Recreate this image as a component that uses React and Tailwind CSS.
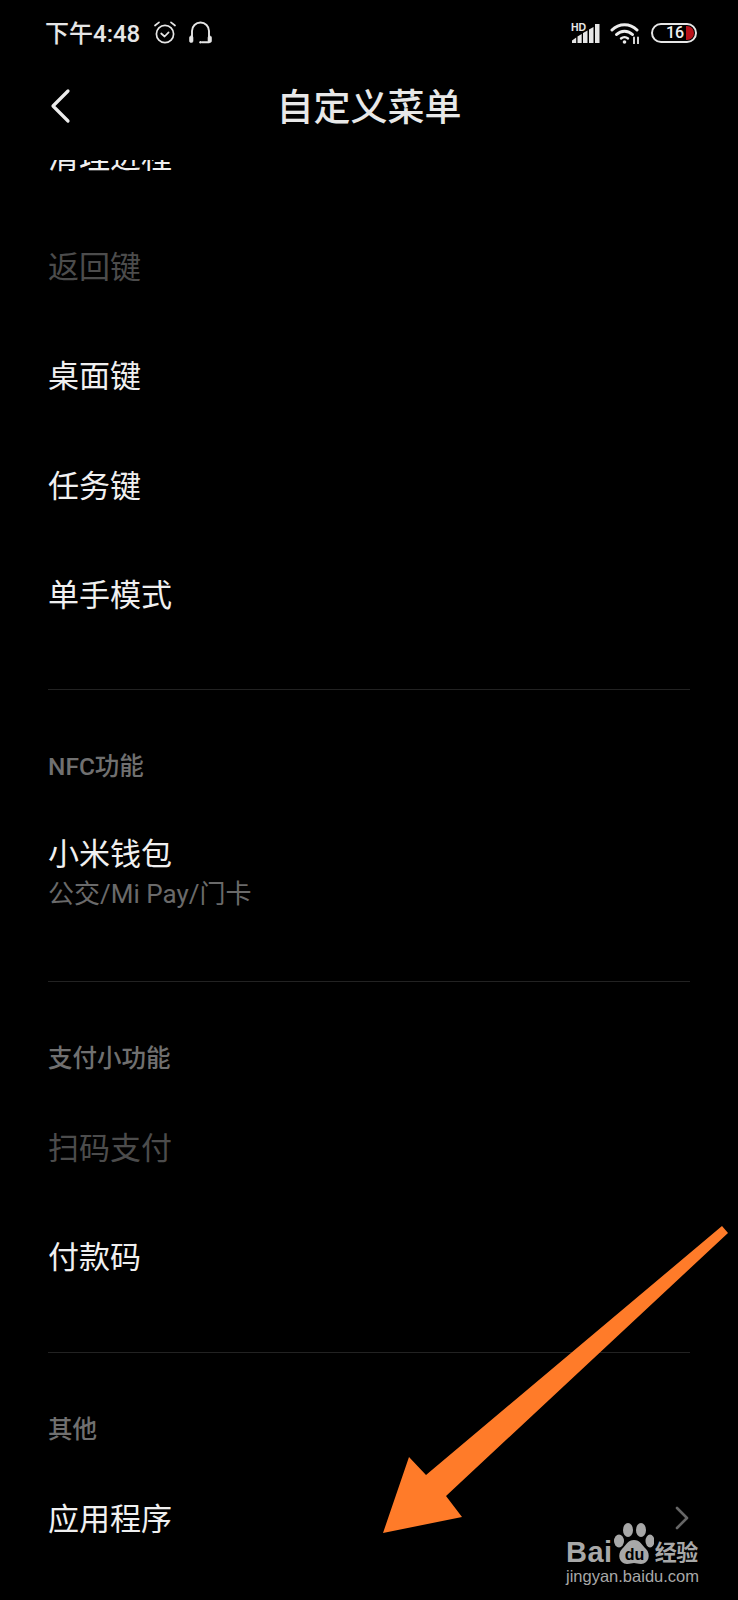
const font = { fontFamily: '"Roboto","Noto Sans CJK SC",sans-serif' };

function Row({ children, muted }) {
  return (
    <div className={`h-[109.5px] pt-[1px] flex items-center text-[31px] leading-[40px] ${muted ? "text-[#4c4c4c]" : "text-[#f0f0f0]"}`}>
      {children}
    </div>
  );
}
function Label({ children }) {
  return <div className="mt-[47px] h-[60px] pt-[2px] flex items-center text-[24.5px] font-medium text-[#707070]">{children}</div>;
}
const Divider = ({ className = "" }) => <div className={`h-px w-[642px] bg-[#222222] ${className}`} />;

export default function App() {
  return (
    <div style={font} className="relative w-[738px] h-[1600px] overflow-hidden bg-black">
      {/* status bar */}
      <div className="h-[66px] pl-[45px] pr-[41px] flex items-center justify-between">
        <div className="flex items-center">
          <span className="text-[24px] font-medium text-[#e6e6e6] leading-none pt-[2px]">下午4:48</span>
          <svg className="ml-[13px] -mt-[1px]" width="24" height="25" viewBox="0 0 24 25" fill="none" stroke="#e6e6e6" strokeWidth="1.7" strokeLinecap="round" strokeLinejoin="round">
            <circle cx="12" cy="14" r="8.6" />
            <path d="M8.2 13.5l3.4 3 4-4.2" />
            <path d="M2 5.5L6 2.3M22 5.5L18 2.3" />
          </svg>
          <svg className="ml-[11px] -mt-[1px]" width="25" height="23" viewBox="0 0 25 23" fill="none" stroke="#e6e6e6" strokeWidth="1.9" strokeLinecap="round">
            <path d="M4 16V10a8.5 8.5 0 0 1 17 0v6" />
            <rect x="1.5" y="15" width="3.5" height="6.5" rx="1.6" fill="#e6e6e6" strokeWidth="0.6" />
            <rect x="20" y="15" width="3.5" height="6.5" rx="1.6" fill="#e6e6e6" strokeWidth="0.6" />
            <path d="M21 21.2h-7" />
            <circle cx="12.5" cy="21.2" r="1.2" fill="#e6e6e6" stroke="none" />
          </svg>
        </div>
        <div className="flex items-center">
          <div className="relative w-[29px] h-[20px]">
            <span className="absolute left-0 -top-[1px] text-[10.5px] font-bold leading-[10px] text-[#e6e6e6]" style={{ fontFamily: '"Liberation Sans",sans-serif' }}>HD</span>
            <svg className="absolute inset-0" width="29" height="20" viewBox="0 0 29 20" fill="#e6e6e6">
              <path d="M1 20v-2.5l4.2-3V20zM6.5 20v-6.5l4.2-2.5v9zM12 20V10l4.5-2.5V20zM18 20V6.5L22.5 4v16zM24 20V1h4.5v19z" />
            </svg>
          </div>
          <svg className="ml-[10px]" width="30" height="22" viewBox="0 0 30 22" fill="none" stroke="#ececec" strokeWidth="3" strokeLinecap="round">
            <path d="M2 8C9 1 20 1 27 8" />
            <path d="M6.5 12.5C11 8 18 8 22.5 12.5" />
            <path d="M11 16.5c2-1.7 5-1.7 7 0" strokeWidth="2.4" />
            <circle cx="14.5" cy="20" r="1.8" fill="#ececec" stroke="none" />
            <path d="M24 15.5v6M28 15.5v6" strokeWidth="1.8" />
          </svg>
          <div className="ml-[11px] relative w-[46px] h-[20px] rounded-[10px] border-2 border-[#e6e6e6] flex items-center">
            <span className="ml-[13px] text-[16px] font-medium leading-none text-[#f0f0f0]">16</span>
            <div className="absolute right-[1px] top-[1px] w-[8px] h-[14px] rounded-r-[7px] bg-[#b8121a]" />
          </div>
        </div>
      </div>

      {/* title bar */}
      <div className="relative h-[94px] flex items-center justify-center">
        <svg className="absolute left-[49px] top-[22px]" width="24" height="36" viewBox="0 0 24 36" fill="none" stroke="#ececec" strokeWidth="3.2" strokeLinecap="round" strokeLinejoin="round">
          <path d="M19 3L4 18l15 15" />
        </svg>
        <h1 className="text-[37px] font-medium leading-none text-[#e8e8e8] -mt-[9px]">自定义菜单</h1>
      </div>

      {/* list */}
      <div className="h-[1440px] overflow-hidden pl-[48px]">
        <div className="-mt-[57px]">
          <Row>清理进程</Row>
          <Row muted>返回键</Row>
          <Row>桌面键</Row>
          <Row>任务键</Row>
          <Row>单手模式</Row>
        </div>
        <Divider className="mt-[38px]" />
        <Label>NFC功能</Label>
        <div className="pt-[38px] pb-[68px]">
          <div className="text-[31px] leading-[40px] text-[#f0f0f0]">小米钱包</div>
          <div className="text-[26px] leading-[38px] text-[#6a6a6a]">公交/Mi Pay/门卡</div>
        </div>
        <Divider />
        <Label>支付小功能</Label>
        <div className="pt-[5px]">
          <Row muted>扫码支付</Row>
          <Row>付款码</Row>
        </div>
        <Divider className="mt-[39px]" />
        <Label>其他</Label>
        <div className="pt-[5px] flex items-center justify-between w-[642px]">
          <Row>应用程序</Row>
          <svg className="-mt-[2px]" width="16" height="24" viewBox="0 0 16 24" fill="none" stroke="#666666" strokeWidth="2.6" strokeLinecap="round" strokeLinejoin="round">
            <path d="M3 2l10 10L3 22" />
          </svg>
        </div>
      </div>

      {/* annotation arrow */}
      <svg className="absolute inset-0 pointer-events-none" width="738" height="1600" viewBox="0 0 738 1600">
        <polygon points="722,1226 728,1233 446,1496 462,1517 383,1533 409,1457 426,1475" fill="#ff7b29" />
      </svg>

      {/* watermark */}
      <div className="absolute left-[566px] top-[1519px] w-[134px] text-[#a8a8a8]">
        <div className="flex items-end h-[46px]">
          <span style={{ fontFamily: '"Liberation Sans",sans-serif' }} className="text-[29px] font-bold leading-[26px] tracking-[0.5px]">Bai</span>
          <svg className="ml-[1px] -mb-[2px]" width="40" height="46" viewBox="0 0 40 46" fill="#a8a8a8">
            <ellipse cx="14" cy="9" rx="5" ry="7" />
            <ellipse cx="27" cy="9" rx="5" ry="7" />
            <ellipse cx="5" cy="20" rx="5" ry="6.5" />
            <ellipse cx="36" cy="20" rx="4.5" ry="6.5" />
            <path d="M20 19c6 0 8 5 12 9 5 5 3 15-5 15-3 0-5-1-7-1s-4 1-7 1c-8 0-10-10-5-15 4-4 6-9 12-9z" />
            <text x="20.5" y="39" textAnchor="middle" fontSize="16" fontWeight="700" fontFamily="Liberation Sans, sans-serif" fill="#000">du</text>
          </svg>
          <span className="ml-[1px] text-[22px] font-bold leading-[24px] tracking-[-0.5px]">经验</span>
        </div>
        <div className="mt-[1px] text-[16.5px] leading-[20px] whitespace-nowrap" style={{ fontFamily: '"Liberation Sans",sans-serif' }}>jingyan.baidu.com</div>
      </div>
    </div>
  );
}
